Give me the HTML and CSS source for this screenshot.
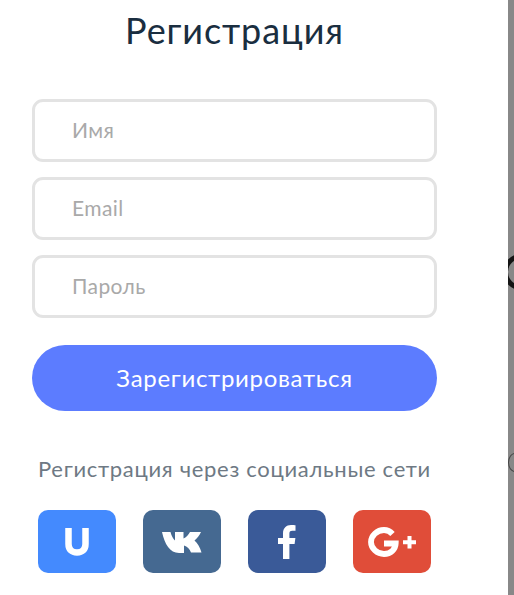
FILE: index.html
```html
<!DOCTYPE html>
<html lang="ru">
<head>
<meta charset="utf-8">
<title>Регистрация</title>
<link rel="stylesheet" href="styles.css">
</head>
<body>
<div class="backdrop">
  <span class="behind behind-top"></span>
  <span class="behind behind-bottom"></span>
</div>
<main class="modal">
  <h1 class="title">Регистрация</h1>
  <form class="form">
    <input class="field" type="text" placeholder="Имя">
    <input class="field" type="text" placeholder="Email">
    <input class="field" type="text" placeholder="Пароль">
    <button class="submit" type="button">Зарегистрироваться</button>
  </form>
  <p class="hint">Регистрация через социальные сети</p>
  <div class="socials">
    <a class="social social-u">
      <svg width="24" height="28" viewBox="0 0 24 28"><path d="M3.500 0v16c0 5.500 3 8.500 8.500 8.500s8.500-3 8.500-8.500V0" fill="none" stroke="#fff" stroke-width="6.500"/></svg>
    </a>
    <a class="social social-vk">
      <svg width="40" height="22" viewBox="0 0 40 22"><path fill="#fff" d="M0 1h8.500c1 3.800 2.500 6.800 4.500 8.500V1h8.500v6.500C24 6.500 26.500 3.800 28 1h11c-1.500 3.300-4 6.500-6.500 8.500 3 2.500 5.500 6.500 7 12H29c-1.300-3.400-3.800-6-7-7V22h-5C8 22 2.500 13 0 1z"/></svg>
    </a>
    <a class="social social-fb">
      <svg width="18" height="34" viewBox="0 0 18 34"><path fill="#fff" d="M5 34V19H0v-6h5V8.500C5 3 8.300 0 13 0c2.200 0 3.800.2 4.500.3v5.400h-3.100c-2.500 0-3 1.200-3 3V13h6l-.8 6h-5.200v15z"/></svg>
    </a>
    <a class="social social-gp">
      <svg width="48" height="30" viewBox="0 0 48 30"><path d="M24.500 7C22.300 4.500 19.500 3 16 3 9.100 3 3 8.600 3 15s6.100 12 13 12c7 0 11.500-4.800 11.700-10.500H16" fill="none" stroke="#fff" stroke-width="5.800"/><path fill="#fff" d="M39.500 9H43.500v4.300H48v4H43.500V21.500H39.500V17.300H35v-4h4.500z"/></svg>
    </a>
  </div>
</main>
</body>
</html>
```
FILE: styles.css
```css
html, body {
  margin: 0;
  padding: 0;
  height: 595px;
  overflow: hidden;
  background: #888888;
}
body {
  position: relative;
  font-family: Lato, "Noto Sans", sans-serif;
}
.backdrop {
  position: absolute;
  inset: 0;
  overflow: hidden;
}
.behind {
  position: absolute;
  box-sizing: border-box;
  border-style: solid;
  border-radius: 50%;
}
.behind-top {
  left: 503px;
  top: 254px;
  width: 36px;
  height: 36px;
  border-width: 5px;
  border-color: #141414;
}
.behind-bottom {
  left: 508px;
  top: 453px;
  width: 14px;
  height: 19px;
  border-width: 1.500px;
  border-color: #444444;
}
.modal {
  position: relative;
  box-sizing: border-box;
  width: 508px;
  height: 595px;
  padding: 0 71px 0 32px;
  background: #ffffff;
}
.title {
  margin: 0;
  padding-top: 8px;
  height: 99px;
  box-sizing: border-box;
  text-align: center;
  font-size: 36px;
  line-height: 44px;
  letter-spacing: 0.9px;
  font-weight: 400;
  color: #1a2e40;
}
.form {
  display: flex;
  flex-direction: column;
  gap: 15px;
}
.field {
  box-sizing: border-box;
  width: 405px;
  height: 63px;
  padding: 0 37px 2px;
  border: 3px solid #e3e3e3;
  border-radius: 11px;
  background: #ffffff;
  font: 400 21px Lato, "Noto Sans", sans-serif;
  letter-spacing: 0.4px;
  outline: none;
}
.field::placeholder {
  color: #a9a9a9;
  opacity: 1;
}
.submit {
  width: 405px;
  height: 66px;
  margin-top: 12px;
  padding: 0 0 2px;
  border: 0;
  border-radius: 33px;
  background: #5c7cff;
  color: #ffffff;
  font: 400 24px Lato, "Noto Sans", sans-serif;
  letter-spacing: 0.7px;
}
.hint {
  margin: 42px 0 0;
  text-align: center;
  font-size: 22px;
  font-weight: 400;
  line-height: 32px;
  letter-spacing: 0.7px;
  color: #6e7984;
}
.socials {
  display: flex;
  gap: 27px;
  margin: 25px 0 0 6px;
}
.social {
  display: flex;
  align-items: center;
  justify-content: center;
  width: 78px;
  height: 63px;
  border-radius: 10px;
}
.social-u { background: #448afe; }
.social-vk { background: #456991; }
.social-fb { background: #3a5a98; }
.social-gp { background: #e04d39; }
```
